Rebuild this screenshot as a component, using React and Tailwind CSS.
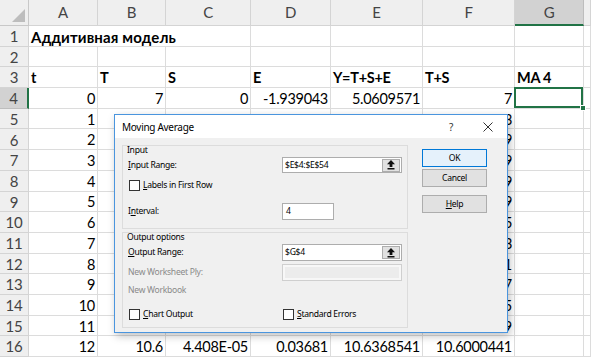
import React from "react";

const colLetters = ["A", "B", "C", "D", "E", "F", "G", ""];

const tail = [
  "7.6133333",
  "8.2333339",
  "8.6344449",
  "8.9922239",
  "9.2411119",
  "9.5533335",
  "9.8133333",
  "10.0044441",
  "10.2322227",
  "10.4033335",
  "10.5133339",
];

// each row: 8 cells A..H, strings; bold header row handled separately
const buildRows = () => {
  const rows = [];
  rows.push({ n: 1, title: "Аддитивная модель" });
  rows.push({ n: 2, cells: ["", "", "", "", "", "", "", ""] });
  rows.push({ n: 3, head: ["t", "T", "S", "E", "Y=T+S+E", "T+S", "MA 4", ""] });
  rows.push({ n: 4, cells: ["0", "7", "0", "-1.939043", "5.0609571", "7", "", ""], active: true });
  tail.forEach((f, i) => {
    rows.push({ n: 5 + i, cells: [String(i + 1), "", "", "", "", f, "", ""] });
  });
  rows.push({ n: 16, cells: ["12", "10.6", "4.408E-05", "0.03681", "10.6368541", "10.6000441", "", ""] });
  return rows;
};

const rows = buildRows();

const Cell = ({ children, className = "" }) => (
  <div className={`border-r border-b border-[#dcdcdc] overflow-hidden whitespace-nowrap flex items-center pt-[2px] ${className}`}>
    {children}
  </div>
);

const RowHead = ({ n, active }) => (
  <div
    className={`flex items-center justify-center border-b border-r pt-[1px] text-[15px] text-[#444] ${
      active ? "bg-[#d2d2d2] border-r-[2px] border-r-[#217346] border-b-[#bdbdbd]" : "bg-[#efefef] border-[#d4d4d4]"
    }`}
  >
    {n}
  </div>
);

const Checkbox = () => <span className="block h-[11px] w-[11px] shrink-0 border border-[#333] bg-white" />;

const UpArrow = () => (
  <svg width="8" height="10" viewBox="0 0 8 10">
    <path d="M4 0 L8 4.2 H5.4 V7 H2.6 V4.2 H0 Z" fill="#111" />
    <rect x="0.5" y="8" width="7" height="1.5" fill="#111" />
  </svg>
);

const RangeBox = ({ value }) => (
  <div className="flex h-full w-[120px] items-center border border-[#adadad] bg-white pl-[2px] pr-[1px]">
    <span className="flex-1 text-[8.6px] text-black">{value}</span>
    <span className="flex h-[13px] w-[18px] items-center justify-center border border-[#adadad] bg-[#e1e1e1]">
      <UpArrow />
    </span>
  </div>
);

const Btn = ({ children, primary }) => (
  <div
    className={`flex h-[18px] w-[65px] items-center justify-center border text-[8.6px] text-black ${
      primary ? "border-[#0078d7] bg-[#e5f1fb]" : "border-[#adadad] bg-[#e1e1e1]"
    }`}
  >
    {children}
  </div>
);

const Dialog = () => (
  <div className="absolute left-[114px] top-[114px] flex h-[219px] w-[394px] flex-col border border-[#4a95de] bg-[#f0f0f0] font-['Noto_Sans','Open_Sans',sans-serif] text-[8.6px] leading-none text-black shadow-[2px_3px_8px_rgba(0,0,0,0.25)]">
    {/* title bar */}
    <div className="flex h-[23px] shrink-0 items-center bg-white pl-[7px]">
      <span className="flex-1 text-[10px]">Moving Average</span>
      <span className="w-[12px] text-center text-[10px] text-[#333]">?</span>
      <span className="ml-[26px] mr-[14px] flex w-[10px] justify-center">
        <svg width="10" height="10" viewBox="0 0 10 10">
          <path d="M0.5 0.5 L9.5 9.5 M9.5 0.5 L0.5 9.5" stroke="#333" strokeWidth="1" />
        </svg>
      </span>
    </div>

    {/* body */}
    <div className="flex flex-1 pl-[7px] pt-[7px]">
      <div className="flex w-[286px] flex-col">
        {/* Input group */}
        <div className="flex h-[84px] flex-col border border-[#dcdcdc] pl-[5px]">
          <div className="-ml-[1px] h-[9px] leading-[9px]">Input</div>
          <div className="mt-[2px] flex h-[16px] items-center">
            <span className="w-[154px]">
              <span className="underline">I</span>nput Range:
            </span>
            <RangeBox value="$E$4:$E$54" />
          </div>
          <div className="ml-[1px] mt-[7px] flex h-[11px] items-center gap-[3px]">
            <Checkbox />
            <span>
              <span className="underline">L</span>abels in First Row
            </span>
          </div>
          <div className="mt-[12px] flex h-[17px] items-center">
            <span className="w-[154px]">
              I<span className="underline">n</span>terval:
            </span>
            <div className="flex h-full w-[52px] items-center border border-[#adadad] bg-white pl-[3px] text-[8.6px]">4</div>
          </div>
        </div>

        {/* Output group */}
        <div className="mt-[3px] flex h-[96px] flex-col border border-[#dcdcdc] pl-[5px]">
          <div className="-ml-[1px] h-[9px] leading-[9px]">Output options</div>
          <div className="mt-[2px] flex h-[17px] items-center">
            <span className="w-[154px]">
              <span className="underline">O</span>utput Range:
            </span>
            <RangeBox value="$G$4" />
          </div>
          <div className="mt-[3px] flex h-[17px] items-center">
            <span className="w-[154px] text-[#8a8a8a]">New Worksheet Ply:</span>
            <div className="h-full w-[120px] border border-[#cfcfcf] bg-[#f7f7f7] p-[2px]">
              <div className="h-full w-full bg-[#ececec]" />
            </div>
          </div>
          <div className="mt-[3px] flex h-[12px] items-center text-[#8a8a8a]">New Workbook</div>
          <div className="mt-[12px] flex h-[12px] items-center">
            <div className="ml-[1px] flex w-[154px] items-center gap-[3px]">
              <Checkbox />
              <span>
                <span className="underline">C</span>hart Output
              </span>
            </div>
            <div className="flex items-center gap-[3px]">
              <Checkbox />
              <span>
                <span className="underline">S</span>tandard Errors
              </span>
            </div>
          </div>
        </div>
      </div>

      {/* buttons */}
      <div className="ml-[14px] mt-[4px] flex flex-col">
        <Btn primary>OK</Btn>
        <div className="mt-[2px]">
          <Btn>Cancel</Btn>
        </div>
        <div className="mt-[8px]">
          <Btn>
            <span>
              <span className="underline">H</span>elp
            </span>
          </Btn>
        </div>
      </div>
    </div>
  </div>
);

export default function App() {
  return (
    <div className="relative h-[357px] w-[591px] overflow-hidden bg-white font-['Lato','Carlito','Noto_Sans',sans-serif] text-[14.5px] tracking-[-0.02em] text-black">
      <div className="grid grid-cols-[29px_69px_68px_85px_80px_92px_92px_69px_7px] grid-rows-[26px_repeat(16,20.6875px)]">
        {/* corner */}
        <div className="relative border-b border-r border-[#c8c8c8] bg-[#efefef]">
          <svg className="absolute bottom-[3px] right-[3px]" width="13" height="13" viewBox="0 0 13 13">
            <path d="M13 0 V13 H0 Z" fill="#bdbdbd" />
          </svg>
        </div>
        {colLetters.map((c, i) => (
          <div
            key={c + i}
            className={`flex items-center justify-center border-r text-[15px] text-[#444] ${
              c === "G"
                ? "border-b-[2px] border-b-[#217346] border-r-[#bdbdbd] bg-[#d2d2d2]"
                : "border-b border-[#d4d4d4] bg-[#efefef]"
            }`}
          >
            {c}
          </div>
        ))}

        {rows.map((r) => {
          if (r.title) {
            return (
              <React.Fragment key={r.n}>
                <RowHead n={r.n} />
                <Cell className="col-span-3 pl-[2px] text-[15px] font-bold tracking-[0.01em]">{r.title}</Cell>
                {[0, 1, 2, 3, 4].map((k) => (
                  <Cell key={k} />
                ))}
              </React.Fragment>
            );
          }
          if (r.head) {
            return (
              <React.Fragment key={r.n}>
                <RowHead n={r.n} />
                {r.head.map((h, k) => (
                  <Cell key={k} className="pl-[2px] font-bold">
                    {h}
                  </Cell>
                ))}
              </React.Fragment>
            );
          }
          return (
            <React.Fragment key={r.n}>
              <RowHead n={r.n} active={r.active} />
              {r.cells.map((v, k) =>
                r.active && k === 6 ? (
                  <div key={k} className="relative border-b border-r border-[#dcdcdc]">
                    <div className="absolute -left-[1px] -top-[1px] bottom-0 right-0 border-2 border-[#217346]" />
                    <div className="absolute -bottom-[3px] -right-[3px] h-[6px] w-[6px] border border-white bg-[#217346]" />
                  </div>
                ) : (
                  <Cell key={k} className="justify-end pr-[2px]">
                    {v}
                  </Cell>
                )
              )}
            </React.Fragment>
          );
        })}
      </div>
      <Dialog />
    </div>
  );
}
